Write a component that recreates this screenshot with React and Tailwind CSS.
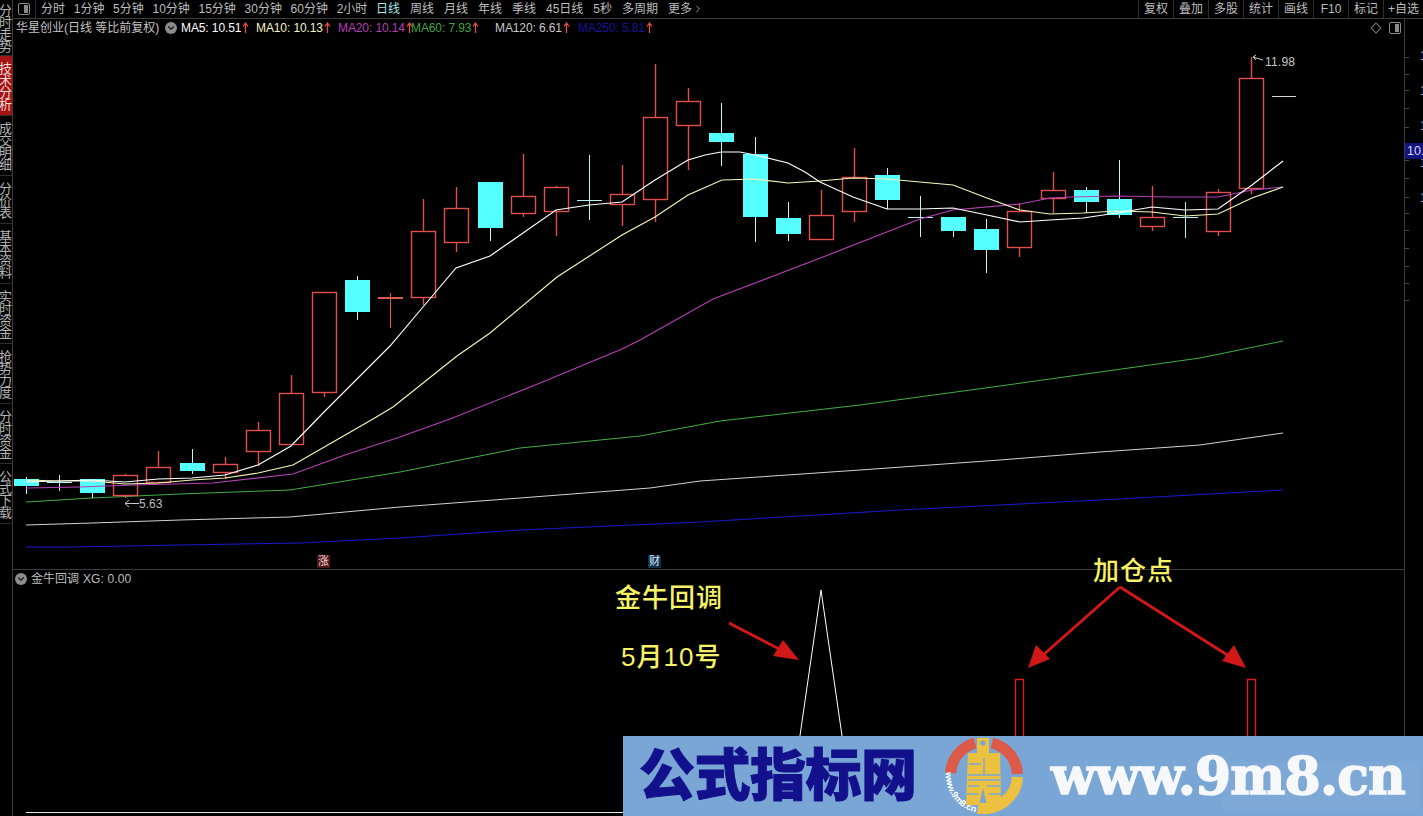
import React from 'react';
import { ChevronDown, ChevronRight } from 'lucide-react';

const tabs = ['分时', '1分钟', '5分钟', '10分钟', '15分钟', '30分钟', '60分钟', '2小时', '日线', '周线', '月线', '年线', '季线', '45日线', '5秒', '多周期'];
const tools = ['复权', '叠加', '多股', '统计', '画线', 'F10', '标记'];
const sideItems = [
  { label: '分时走势', h: 'h-[56px]' },
  { label: '技术分析', h: 'h-[60px]', active: true },
  { label: '成交明细', h: 'h-[60px]' },
  { label: '分价表', h: 'h-[48px]' },
  { label: '基本资料', h: 'h-[60px]' },
  { label: '实时资金', h: 'h-[60px]' },
  { label: '抢势力度', h: 'h-[60px]' },
  { label: '分时资金', h: 'h-[60px]' },
  { label: '公式下载', h: 'h-[60px]' },
];
const maLabels = [
  { text: 'MA5: 10.51', cls: 'text-white w-[75px]' },
  { text: 'MA10: 10.13', cls: 'text-[#f4f4c8] w-[82px]' },
  { text: 'MA20: 10.14', cls: 'text-[#b83cb8] w-[73px]' },
  { text: 'MA60: 7.93', cls: 'text-[#3fa53f] w-[84px]' },
  { text: 'MA120: 6.61', cls: 'text-[#c8c8c8] w-[83px]' },
  { text: 'MA250: 5.81', cls: 'text-[#16169a] w-[72px]' },
];

// x, bodyTop, bodyBottom, wickTop, wickBottom, kind: r = hollow red, c = filled cyan, d = doji
const candles = [
  [26, 479, 486, 477, 494, 'c'], [59, 482, 482, 475, 491, 'd'], [92, 479, 493, 479, 498, 'c'], [125, 475, 495, 474, 498, 'r'],
  [158, 467, 482, 451, 483, 'r'], [192, 463, 471, 449, 474, 'c'], [225, 464, 472, 457, 479, 'r'], [258, 430, 451, 422, 466, 'r'],
  [291, 393, 444, 375, 444, 'r'], [324, 292, 392, 292, 397, 'r'], [357, 280, 312, 276, 320, 'c'], [390, 298, 298, 293, 328, 'rd'],
  [423, 231, 297, 199, 305, 'r'], [456, 208, 242, 187, 252, 'r'], [490, 182, 228, 182, 241, 'c'], [523, 196, 213, 154, 217, 'r'],
  [556, 187, 211, 186, 236, 'r'], [589, 200, 200, 155, 220, 'd'], [622, 194, 204, 165, 226, 'r'], [655, 117, 199, 64, 222, 'r'],
  [688, 101, 125, 88, 170, 'r'], [721, 133, 142, 103, 166, 'c'], [755, 154, 217, 137, 242, 'c'], [788, 218, 234, 202, 241, 'c'],
  [821, 215, 239, 190, 239, 'r'], [854, 177, 211, 148, 222, 'r'], [887, 175, 200, 168, 209, 'c'], [920, 217, 217, 196, 237, 'd'],
  [953, 217, 231, 217, 237, 'c'], [986, 229, 250, 219, 273, 'c'], [1019, 211, 247, 203, 257, 'r'], [1053, 190, 198, 172, 213, 'r'],
  [1086, 190, 202, 187, 213, 'c'], [1119, 199, 215, 160, 218, 'c'], [1152, 217, 226, 186, 231, 'r'], [1185, 217, 217, 202, 238, 'd'],
  [1218, 192, 231, 189, 236, 'r'], [1251, 78, 188, 57, 194, 'r'],
];

const ma5 = '26,482 59,481 92,480 125,482 158,479 192,478 225,475 258,465 291,446 324,412 357,379 390,346 423,307 456,268 490,256 523,233 556,210 589,205 622,202 655,180 688,160 705,155 721,152 740,152 755,155 788,163 805,172 820,182 853,197 887,209 920,209 953,208 987,215 1020,222 1050,220 1083,218 1117,213 1152,207 1185,210 1218,209 1252,185 1283,161';
const ma10 = '26,480 59,481 92,481 125,484 158,483 192,480 225,478 258,473 293,465 333,442 373,419 393,407 457,356 490,333 557,277 622,235 655,217 688,195 722,180 755,179 788,183 820,181 853,178 887,179 920,182 953,185 987,198 1020,210 1050,214 1083,213 1117,211 1152,212 1185,216 1218,214 1252,198 1283,187';
const ma20 = '26,488 80,487 133,485 213,483 293,474 345,455 400,437 450,419 540,383 622,349 640,340 713,299 823,257 920,219 953,210 1020,204 1050,198 1070,197 1117,196 1170,197 1218,197 1252,190 1283,187';
const ma60 = '26,502 92,498 180,494 290,490 400,472 520,448 640,436 720,421 860,405 1000,386 1100,372 1200,358 1283,341';
const ma120 = '26,525 92,523 180,520 290,517 400,507 520,498 650,488 700,481 860,470 1000,460 1100,452 1200,445 1283,433';
const ma250 = '26,547 73,547 180,545 300,543 400,538 520,530 700,522 900,510 1100,500 1283,490';

const axisTicks = [57, 74, 90, 108, 127, 143, 160, 178, 197, 213, 230, 248, 266, 283, 300];
const axisDigits = [50, 85, 120, 157, 192];

const Candle = ({ x, top, bottom, wickTop, wickBottom, kind }) => {
  if (kind === 'd' || kind === 'rd') {
    const color = kind === 'rd' ? '#e05650' : '#b8f2f2';
    return (
      <g stroke={color} shapeRendering="crispEdges">
        <line x1={x} x2={x} y1={wickTop} y2={wickBottom} />
        <line x1={x - 12} x2={x + 13} y1={top} y2={top} strokeWidth={kind === 'rd' ? 2 : 1} />
      </g>
    );
  }
  if (kind === 'c') {
    return (
      <g shapeRendering="crispEdges">
        <line x1={x} x2={x} y1={wickTop} y2={wickBottom} stroke="#c8f6f6" />
        <rect x={x - 12} y={top} width={25} height={bottom - top} fill="#55ffff" />
      </g>
    );
  }
  return (
    <g stroke="#e04e4e" strokeWidth="1.4">
      <line x1={x + 0.5} x2={x + 0.5} y1={wickTop} y2={top} />
      <line x1={x + 0.5} x2={x + 0.5} y1={bottom} y2={wickBottom} />
      <rect x={x - 11.5} y={top + 0.5} width={24} height={bottom - top} fill="none" />
    </g>
  );
};

const RoundChevron = () => (
  <span className="flex h-[12px] w-[12px] items-center justify-center rounded-full bg-[#8c8c8c]">
    <ChevronDown className="h-[10px] w-[10px] text-[#222]" strokeWidth={3} />
  </span>
);

const PanelIcon = () => (
  <span className="flex h-[12px] w-[12px] justify-end rounded-[2px] border border-[#8a8a8a] p-px">
    <span className="h-full w-[4px] bg-[#8a8a8a]" />
  </span>
);

const UpArrow = () => (
  <svg width="7" height="12" viewBox="0 0 7 12" className="shrink-0">
    <path d="M3.5 1 L3.5 11 M1 4.5 L3.5 1 L6 4.5" stroke="#f04c4c" strokeWidth="1.2" fill="none" />
  </svg>
);

const Toolbar = () => (
  <div className="flex h-[19px] shrink-0 items-center border-b border-[#3c3c3c] text-[12px] leading-none text-[#bdbdbd]">
    <div className="flex h-full w-[23px] items-center justify-end border-r border-[#2a2a2a] pr-[5px]">
      <PanelIcon />
    </div>
    <div className="ml-[5px] flex items-center gap-[8.7px]">
      {tabs.map((t, i) => (
        <span key={t} className={t === '日线' ? 'text-[#a8e6ee]' : i > 8 ? 'ml-[1.3px]' : ''}>{t}</span>
      ))}
      <span className="ml-[1.3px] flex items-center">更多<ChevronRight className="h-[12px] w-[12px]" strokeWidth={1.5} /></span>
    </div>
    <div className="ml-auto flex h-full items-center">
      {tools.map((t) => (
        <span key={t} className="flex h-full w-[35px] items-center justify-center border-l border-[#2e2e2e]">{t}</span>
      ))}
      <span className="flex h-full w-[40px] items-center justify-center border-l border-[#2e2e2e]">+自选</span>
    </div>
  </div>
);

const Sidebar = () => (
  <div className="flex w-[13px] shrink-0 flex-col overflow-hidden border-r border-[#3c3c3c] text-[13px] text-[#b4b4b4]">
    {sideItems.map((item) => (
      <div key={item.label} className={`flex shrink-0 items-center justify-end border-b border-[#2c2c2c] ${item.h} ${item.active ? 'bg-[#a51212] text-[#f0d8d8]' : ''}`}>
        <span className="mr-[1px] whitespace-nowrap leading-[13px] tracking-[-1px] [writing-mode:vertical-rl]">{item.label}</span>
      </div>
    ))}
  </div>
);

const KLinePane = () => (
  <div className="relative h-[551px] shrink-0 border-b border-[#3c3c3c]">
    <div className="relative flex h-[18px] items-center pl-[3px] text-[12px] text-[#c8c8c8]">
      <span className="w-[149px] whitespace-nowrap text-[#c4c4c4]">华星创业(日线 等比前复权)</span>
      <RoundChevron />
      <div className="ml-[4px] flex items-center">
        {maLabels.map((m) => (
          <span key={m.text} className={`flex items-center gap-[1px] whitespace-nowrap tracking-[-0.1px] ${m.cls}`}>
            <span>{m.text}</span>
            <UpArrow />
          </span>
        ))}
      </div>
      <div className="absolute right-[3px] top-[3px] flex items-center gap-[9px]">
        <span className="h-[8px] w-[8px] rotate-45 border border-[#777]" />
        <PanelIcon />
      </div>
    </div>
    <svg className="absolute left-0 top-0 h-[551px] w-[1391px]" viewBox="13 19 1391 551" fill="none">
      <polyline points={ma250} stroke="#1a1ad0" />
      <polyline points={ma120} stroke="#d2d2d2" />
      <polyline points={ma60} stroke="#43b043" />
      {candles.map(([x, top, bottom, wickTop, wickBottom, kind]) => (
        <Candle key={x} x={x} top={top} bottom={bottom} wickTop={wickTop} wickBottom={wickBottom} kind={kind} />
      ))}
      <polyline points={ma20} stroke="#b541b5" strokeWidth="1.15" />
      <polyline points={ma10} stroke="#f6f6b8" strokeWidth="1.15" />
      <polyline points={ma5} stroke="#ffffff" strokeWidth="1.15" />
      <path d="M1272 96.5 H1296" stroke="#d8d8d8" />
      <path d="M1263 60 L1253 57 M1253 57 L1256 55 M1253 57 L1256 60" stroke="#c8c8c8" />
      <path d="M139 503.5 H125 M129 500 L125 503.5 L129 507" stroke="#c8c8c8" />
    </svg>
    <span className="absolute left-[1252px] top-[37px] text-[12px] leading-none tracking-[0.2px] text-[#c8c8c8]">11.98</span>
    <span className="absolute left-[126px] top-[479px] text-[12px] leading-none text-[#bdbdbd]">5.63</span>
    <span className="absolute left-[304px] top-[536px] bg-[#4a1414] px-px text-[11px] leading-[13px] text-[#f4d8d8]">涨</span>
    <span className="absolute left-[635px] top-[536px] bg-[#10304a] px-px text-[11px] leading-[13px] text-[#d4eeff]">财</span>
  </div>
);

const IndicatorPane = () => (
  <div className="relative flex-1">
    <div className="flex h-[16px] items-center gap-[4px] pl-[2px] pt-[1px] text-[12px] text-[#bdbdbd]">
      <RoundChevron />
      <span className="whitespace-nowrap">金牛回调</span>
      <span className="whitespace-nowrap tracking-[0.1px]">XG: 0.00</span>
    </div>
    <svg className="absolute left-0 top-0 h-[246px] w-[1391px]" viewBox="13 570 1391 246" fill="none">
      <path d="M26 812.5 H830" stroke="#e8e8e8" />
      <path d="M789 812 L821 590 L853 812" stroke="#ffffff" />
      <path d="M1015.5 816 V679.5 H1023.5 V816" stroke="#e01a1a" strokeWidth="1.4" />
      <path d="M1247.5 816 V679.5 H1255.5 V816" stroke="#e01a1a" strokeWidth="1.4" />
      <path d="M729 623 L785 652" stroke="#d01818" strokeWidth="3" />
      <path d="M799 660 L773 656 L783 640 Z" fill="#d01818" />
      <path d="M1120 587 L1042 656" stroke="#d01818" strokeWidth="3" />
      <path d="M1028 668 L1036 645 L1050 659 Z" fill="#d01818" />
      <path d="M1120 587 L1232 658" stroke="#d01818" strokeWidth="3" />
      <path d="M1246 668 L1222 661 L1234 645 Z" fill="#d01818" />
    </svg>
    <Note className="left-[602px] top-[13px]" text="金牛回调" />
    <Note className="left-[608px] top-[72px]" text="5月10号" />
    <Note className="left-[1080px] top-[-14px]" text="加仓点" />
  </div>
);

const Note = ({ className, text }) => (
  <span className={`absolute whitespace-nowrap text-[26px] font-medium leading-[30px] tracking-[1px] text-[#f6f265] ${className}`}>{text}</span>
);

const Axis = () => (
  <div className="relative w-[19px] shrink-0 overflow-hidden border-l border-[#3c3c3c] text-[12px] text-[#a8a8a8]">
    {axisTicks.map((y) => (
      <span key={y} className="absolute left-0 h-px w-[4px] bg-[#444]" style={{ top: y - 19 }} />
    ))}
    {axisDigits.map((y) => (
      <span key={y} className="absolute left-[15px] leading-[12px]" style={{ top: y - 19 }}>1</span>
    ))}
    <span className="absolute left-0 top-[124px] h-[16px] w-[19px] bg-[#14147e] pl-[2px] text-[12.5px] leading-[16px] text-[#d8d8f4]">10.</span>
  </div>
);

const CoinLogo = () => (
  <svg width="84" height="80" viewBox="942 736 84 80" className="shrink-0" fill="none">
    <defs>
      <path id="logo-arc" d="M946 772 A38 38 0 0 0 980 813" />
    </defs>
    <path d="M975 743 A33.5 33.5 0 0 0 950.5 773" stroke="#dc5a48" strokeWidth="11" />
    <path d="M992 743 A33.5 33.5 0 0 1 1017.5 774" stroke="#dc5a48" strokeWidth="11" />
    <path d="M1017.5 777 A33.5 33.5 0 0 1 978 808" stroke="#ecc13f" strokeWidth="11" />
    <text fontSize="9" fontWeight="700" fill="#ffffff" fontFamily="Liberation Sans, sans-serif">
      <textPath href="#logo-arc">www.9m8.cn</textPath>
    </text>
    <path d="M977 738 H989 V753 H1000 L1001 805 H987 L983 788 L979 805 H966 L968 753 H977 Z" fill="#ecc13f" />
    <circle cx="983" cy="743" r="2.6" fill="#7aa6d5" />
    <path d="M969 764 H981 M984 758 V774 M968 775 H1000 M968 780 H1000 M968 786 H979 M987 786 H1000 M967 794 H978 M989 794 H1001" stroke="#7aa6d5" strokeWidth="1.3" />
  </svg>
);

const Banner = () => (
  <div className="absolute bottom-0 right-0 flex h-[80px] w-[800px] items-center bg-[#7aa6d5] pl-[16px]">
    <span className="w-[303px] shrink-0 whitespace-nowrap text-[56px] font-black leading-none tracking-[-0.5px] text-[#13108c] [-webkit-text-stroke:1px_#13108c]">公式指标网</span>
    <CoinLogo />
    <span className="ml-[25px] whitespace-nowrap text-[52px] font-bold leading-none tracking-[-0.8px] text-[#f6f8fb] [-webkit-text-stroke:1.5px_#f6f8fb] [font-family:'DejaVu_Serif',serif]">www.9m8.cn</span>
    <div className="absolute bottom-[6px] right-[3px] h-[48px] w-[198px] bg-white/[0.03]" />
  </div>
);

export default function App() {
  return (
    <div className="relative flex h-[816px] w-[1423px] overflow-hidden bg-black [font-family:'Liberation_Sans','Noto_Sans_CJK_SC',sans-serif]">
      <Sidebar />
      <div className="flex min-w-0 flex-1 flex-col">
        <Toolbar />
        <div className="flex min-h-0 flex-1">
          <div className="flex min-w-0 flex-1 flex-col">
            <KLinePane />
            <IndicatorPane />
          </div>
          <Axis />
        </div>
      </div>
      <Banner />
    </div>
  );
}
